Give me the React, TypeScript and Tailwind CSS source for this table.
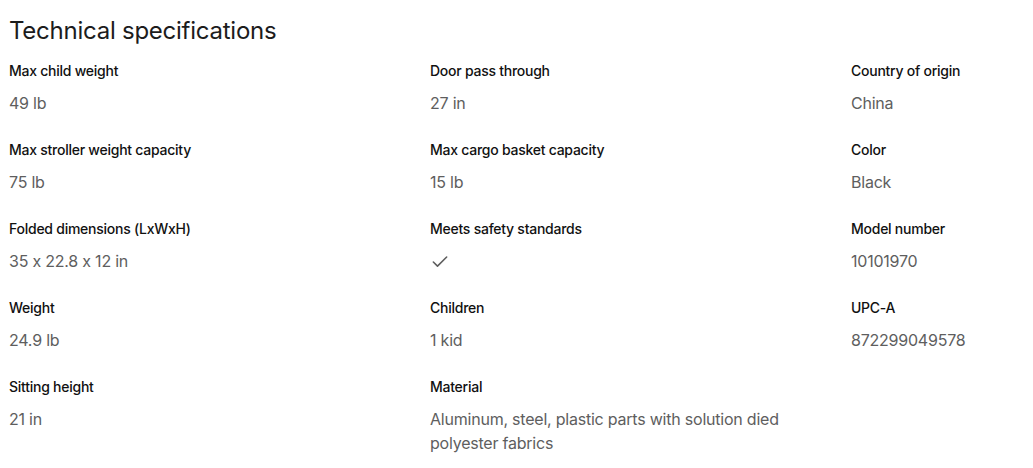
import React from 'react';
import { Check } from 'lucide-react';

type Spec = { label: string; value?: React.ReactNode };

const specs: Spec[] = [
  { label: 'Max child weight', value: '49 lb' },
  { label: 'Door pass through', value: '27 in' },
  { label: 'Country of origin', value: 'China' },
  { label: 'Max stroller weight capacity', value: '75 lb' },
  { label: 'Max cargo basket capacity', value: '15 lb' },
  { label: 'Color', value: 'Black' },
  { label: 'Folded dimensions (LxWxH)', value: '35 x 22.8 x 12 in' },
  {
    label: 'Meets safety standards',
    value: (
      <div className="h-[24px] pt-[3px]">
        <Check size={20} strokeWidth={1.9} className="block text-[#5e5e5e]" />
      </div>
    ),
  },
  { label: 'Model number', value: '10101970' },
  { label: 'Weight', value: '24.9 lb' },
  { label: 'Children', value: '1 kid' },
  { label: 'UPC-A', value: '872299049578' },
  { label: 'Sitting height', value: '21 in' },
  { label: 'Material', value: 'Aluminum, steel, plastic parts with solution died polyester fabrics' },
];

const SpecItem: React.FC<Spec> = ({ label, value }) => (
  <div className="pb-[25px] pr-[56px]">
    <div className="text-[14px] leading-[20px] font-medium text-[#111111] tracking-[-0.25px]">{label}</div>
    <div className="mt-[10px] min-h-[24px] text-[16px] leading-[24px] text-[#5e5e5e] tracking-[-0.22px]">{value}</div>
  </div>
);

export default function App() {
  return (
    <div className="w-[1033px] h-[468px] overflow-hidden bg-white font-['Inter',sans-serif] [font-feature-settings:'calt'_0]">
      <div className="pl-[9px] pt-[15px]">
        <h2 className="text-[24px] leading-[32px] font-normal text-[#1c1c1c] tracking-[-0.25px]">
          Technical specifications
        </h2>
        <div className="mt-[14px] grid grid-cols-[repeat(3,421px)]">
          {specs.map((s) => (
            <SpecItem key={s.label} {...s} />
          ))}
        </div>
      </div>
    </div>
  );
}
